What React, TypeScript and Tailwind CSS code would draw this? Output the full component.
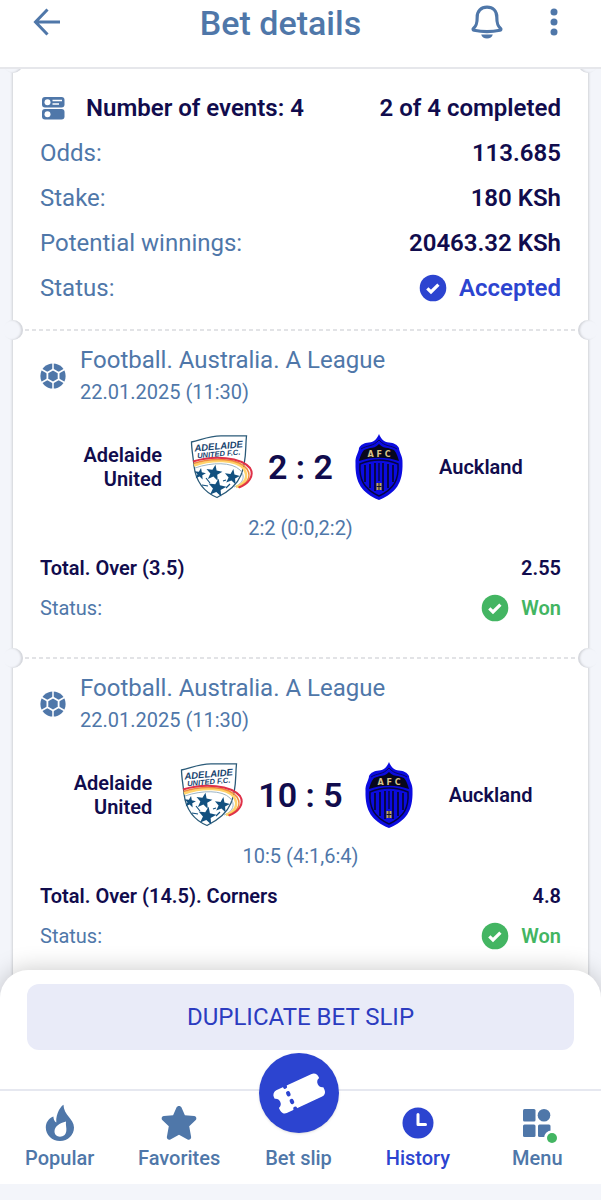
import type { ReactNode } from "react";

type Event = {
  id: number;
  score: string;
  periods: string;
  market: string;
  odds: string;
};

const events: Event[] = [
  { id: 1, score: "2 : 2", periods: "2:2 (0:0,2:2)", market: "Total. Over (3.5)", odds: "2.55" },
  { id: 2, score: "10 : 5", periods: "10:5 (4:1,6:4)", market: "Total. Over (14.5). Corners", odds: "4.8" },
];

const summary = [
  { label: "Odds:", value: "113.685" },
  { label: "Stake:", value: "180 KSh" },
  { label: "Potential winnings:", value: "20463.32 KSh" },
];

function BackIcon() {
  return (
    <svg width="28" height="28" viewBox="0 0 28 28" fill="none" stroke="currentColor" strokeWidth="3">
      <path d="M28 14H3M15.500 1.500 3.500 14l12 12.500" />
    </svg>
  );
}

function BellIcon() {
  return (
    <svg width="32" height="36" viewBox="0 0 32 36" fill="none" stroke="currentColor" strokeWidth="3.200" strokeLinejoin="round">
      <path d="M16 3.200c-6 0-9.800 4-9.800 9.800 0 6.500-.8 8.800-3.700 11.500-.8.800-.5 1.600.5 1.800 8 1.700 18 1.700 26 0 1-.2 1.300-1 .5-1.800-2.900-2.700-3.700-5-3.700-11.500 0-5.800-3.800-9.800-9.800-9.800Z" />
      <path d="M10.200 30.500h11.600c-.6 2.600-2.800 4-5.800 4s-5.200-1.400-5.800-4Z" fill="currentColor" stroke="none" />
    </svg>
  );
}

function DotsIcon() {
  return (
    <svg width="8" height="28" viewBox="0 0 8 28" fill="currentColor">
      <circle cx="4" cy="4" r="3.500" />
      <circle cx="4" cy="14" r="3.500" />
      <circle cx="4" cy="24" r="3.500" />
    </svg>
  );
}

function EventsIcon() {
  return (
    <svg width="26" height="26" viewBox="0 0 26 26">
      <rect x="2" y="2" width="22.500" height="10.500" rx="3" fill="#4f77a9" />
      <rect x="2" y="14" width="22.500" height="10.500" rx="3" fill="#4f77a9" />
      <circle cx="7.500" cy="7.250" r="3" fill="#fff" />
      <circle cx="7.500" cy="19.250" r="3" fill="#fff" />
      <path d="M12.500 5.500h9.500M12.500 9h6.500" stroke="#fff" strokeWidth="1.600" />
    </svg>
  );
}

function BallIcon() {
  return (
    <svg width="26" height="26" viewBox="0 0 26 26">
      <circle cx="13" cy="13" r="12.600" fill="#4f77a9" />
      <path
        d="M13 0v8M13 18v8M1.700 6.500l7 4M24.300 6.500l-7 4M1.700 19.500l7-4M24.300 19.500l-7-4"
        stroke="#fff"
        strokeWidth="1.500"
      />
      <path d="M13 6.500 18.600 9.750v6.500L13 19.500l-5.600-3.250v-6.500Z" fill="#4f77a9" stroke="#fff" strokeWidth="1.800" />
    </svg>
  );
}

function CheckBadge() {
  return (
    <svg width="28" height="28" viewBox="0 0 28 28" aria-hidden="true">
      <circle cx="14" cy="14" r="13.300" fill="currentColor" />
      <path d="m8.300 14.300 3.700 3.600 7.400-7.300" fill="none" stroke="#fff" strokeWidth="3.200" />
    </svg>
  );
}

function Star({ x, y, r }: { x: number; y: number; r: number }) {
  return (
    <path
      transform={`translate(${x} ${y}) scale(${r}) rotate(10)`}
      d="M0-1 .25-.35.95-.31.41.13.59.81 0 .43-.59.81-.41.13-.95-.31-.25-.35Z"
      fill="#12507f"
    />
  );
}

function AdelaideCrest() {
  return (
    <svg className="shrink-0" width="64" height="64" viewBox="0 0 64 64" role="img" aria-label="Adelaide United">
      <path d="M1.500 7C10 5.500 18 .8 31 .8S48 1 56.500.8C55 15 57 25 51 40 47 50 38 57 27 62.500 14 57 6 47 4 31 3.200 22 1.500 14 1.500 7Z" fill="#fff" stroke="#2a5a78" strokeWidth="1.300" />
      <Star x={10} y={39} r={6} />
      <Star x={24} y={38} r={8.5} />
      <Star x={42} y={42} r={8} />
      <Star x={27} y={53} r={9.5} />
      <path d="M12 50l6 1M33 46l3-1M16 43l4 5M36 53l4-4" stroke="#12507f" strokeWidth="1.200" />
      <path d="M5 33C22 27 42 27 50 35c6 6 3 14-6 17" fill="none" stroke="#9db4c4" strokeWidth="1" />
      <path d="M4 30.500C22 24 46 24 54 34c5 8 1 15-8 18" fill="none" stroke="#ffd36b" strokeWidth="2.500" />
      <path d="M3.500 28.500C23 22 49 23 57 34c5 8 0 15-9 18.500" fill="none" stroke="#f08a3c" strokeWidth="1.500" />
      <path d="M3 26.500C24 20 51 22 60 33c5 8-2 16-11 19.500" fill="none" stroke="#df3148" strokeWidth="2" />
      <g transform="rotate(-5 28 16)" fill="#17436e" fontFamily="Liberation Sans, sans-serif" fontWeight="700" fontStyle="italic" textAnchor="middle">
        <text x="29" y="14.500" fontSize="9.500">ADELAIDE</text>
        <text x="28.500" y="21.500" fontSize="7.500">UNITED F.C.</text>
      </g>
    </svg>
  );
}

function AucklandCrest() {
  return (
    <svg className="shrink-0" width="64" height="66" viewBox="0 0 64 66" role="img" aria-label="Auckland">
      <path d="M32 0c2 5 5 8 10 8.500 5 .5 8 2 10 5.500 0 4 4 8 3.500 15C56 49 49 59 32 66 15 59 8 49 8.500 29 8 22 12 18 12 14c2-3.500 5-5 10-5.500C27 8 30 5 32 0Z" fill="#0b0be0" />
      <path d="M32 10c3 3 6 4 9 4l6 2c2 2 4 7 5 11-11-4.500-29-4.500-40 0 1-4 3-9 5-11l6-2c3 0 6-1 9-4Z" fill="#07071b" />
      <path d="M13 30c12-5 26-5 38 0 1 16-4 25-19 32C17 55 12 46 13 30Z" fill="none" stroke="#050540" strokeWidth="1.500" />
      <path d="M18 31v17M23 30v24M28 29v28M36 29v28M41 30v24M46 31v17" stroke="#07074a" strokeWidth="2" />
      <path d="M32 29v18" stroke="#07074a" strokeWidth="1.500" />
      <path d="M14 15c6-4 12-2 18-9 6 7 12 5 18 9" fill="none" stroke="#070760" strokeWidth="1" />
      <rect x="29.500" y="49" width="5" height="7" fill="#c4a756" />
      <path d="M32 49v7M29.500 52.500h5" stroke="#111133" strokeWidth="1" />
      <text x="32" y="23" textAnchor="middle" fontFamily="DejaVu Sans, sans-serif" fontSize="8" fontWeight="700" fill="#d9c48b">
        A F C
      </text>
    </svg>
  );
}

function FlameIcon() {
  return (
    <svg width="30" height="38" viewBox="0 0 30 38" fill="currentColor">
      <path
        fillRule="evenodd"
        d="M18.500.8c-1.500.4-8 8-7.200 17.700-2-1-2.800-3.500-2.900-6C3.500 14.500.8 18.500.8 23.500.8 31 7 37 15 37s14-6 14-13.500C29 15 18.500 11 18.500.8ZM21 17.500c-6.500 1.500-11.500 5-11.500 10 0 3 2.300 5.200 5.500 5.200 3.500 0 5.800-2 6.300-5.700.5-3-.8-6-.3-9.500Z"
      />
    </svg>
  );
}

function StarIcon() {
  return (
    <svg width="36" height="36" viewBox="0 0 36 36" fill="currentColor">
      <path d="M15.500 2.500c1-2 4-2 5 0l3.400 7.700 9.200.9c2.200.3 3 2.700 1.400 4.200l-6.300 6 1.900 10.500c.4 2.200-1.700 3.500-3.500 2.600L18 29.800l-8.600 4.600c-1.800.9-3.900-.4-3.500-2.600l1.900-10.500-6.300-6c-1.600-1.500-.8-3.900 1.400-4.200l9.200-.9Z" />
    </svg>
  );
}

function TicketIcon() {
  return (
    <svg width="56" height="56" viewBox="0 0 56 56">
      <g transform="rotate(-25 28 28)">
        <path
          d="M8.500 16h39a5 5 0 0 1 5 5v2a5.200 5.200 0 0 0 0 10v3a5 5 0 0 1-5 5h-39a5 5 0 0 1-5-5v-3a5.200 5.200 0 0 0 0-10v-2a5 5 0 0 1 5-5Z"
          fill="#fff"
        />
        <path d="M18 15v1.500M18 23.500v1.500M18 32v1.500M18 40.500V42" stroke="#2c44d0" strokeWidth="4" strokeLinecap="round" />
      </g>
    </svg>
  );
}

function ClockIcon() {
  return (
    <svg width="32" height="32" viewBox="0 0 32 32">
      <circle cx="16" cy="16" r="15.500" fill="currentColor" />
      <path d="M16 7.500V17.500h7.500" fill="none" stroke="#fff" strokeWidth="3" strokeLinecap="round" strokeLinejoin="round" />
    </svg>
  );
}

function MenuIcon() {
  return (
    <svg width="36" height="36" viewBox="0 0 36 36" fill="currentColor">
      <rect x="4" y="4" width="12.500" height="12.500" rx="1.500" />
      <circle cx="25" cy="10.200" r="6.300" />
      <rect x="4" y="19.500" width="12.500" height="12.500" rx="1.500" />
      <rect x="19" y="19.500" width="12.500" height="12.500" rx="1.500" />
      <circle cx="32.500" cy="33" r="7.500" fill="#fff" />
    </svg>
  );
}

function Notches({ className }: { className: string }) {
  return (
    <>
      <span className={`absolute -left-2.5 size-5 rounded-full bg-[#f3f5fa] shadow-[inset_-2px_0_2px_#d3d5da] ${className}`} />
      <span className={`absolute -right-2.5 size-5 rounded-full bg-[#f3f5fa] shadow-[inset_2px_0_2px_#d3d5da] ${className}`} />
    </>
  );
}

function EventSection({ event }: { event: Event }) {
  return (
    <section className="relative px-[27px] pt-3 pb-9">
      <Notches className="-top-2.5" />
      <div className="absolute inset-x-3 top-0 h-0.5 -translate-y-px bg-[repeating-linear-gradient(90deg,#e2e3e6_0_4px,transparent_4px_7px)]" />
      <div className="flex items-center gap-3.5 pt-0.5">
        <BallIcon />
        <div className="text-[#4f77a9]">
          <h2 className="text-2xl leading-8">Football. Australia. A League</h2>
          <p className="text-xl leading-8">22.01.2025 (11:30)</p>
        </div>
      </div>
      <div className="mt-[26px] flex items-center text-xl leading-6 font-semibold">
        <p className="flex-1 pr-7 pl-4 text-right">Adelaide United</p>
        <AdelaideCrest />
        <p className="px-3.5 text-[34px] leading-10 whitespace-pre">{event.score}</p>
        <AucklandCrest />
        <p className="flex-1 pr-4 pl-7">Auckland</p>
      </div>
      <p className="mt-3.5 text-center text-xl leading-7 text-[#4f77a9]">{event.periods}</p>
      <div className="mt-3 flex justify-between text-xl leading-7 font-semibold">
        <p>{event.market}</p>
        <p>{event.odds}</p>
      </div>
      <div className="mt-3 flex justify-between text-xl leading-7">
        <p className="text-[#4f77a9]">Status:</p>
        <p className="flex items-center gap-3 font-semibold text-[#43b562]">
          <CheckBadge />
          Won
        </p>
      </div>
    </section>
  );
}

function NavItem({ label, active, children }: { label: string; active?: boolean; children: ReactNode }) {
  return (
    <a
      href="#"
      className={`relative flex flex-1 flex-col items-center text-xl leading-6 font-medium ${active ? "text-[#2c44d0]" : "text-[#4f77a9]"}`}
    >
      <span className="flex h-10 items-center justify-center">{children}</span>
      <span className="mt-[3px]">{label}</span>
    </a>
  );
}

export default function App() {
  return (
    <div className="flex min-h-screen flex-col bg-[#f3f5fa] font-[Roboto,sans-serif] text-[#110c4d]">
      <header className="sticky top-0 z-20 flex h-[69px] items-start border-b-2 border-[#e6e7eb] bg-white px-8 text-[#4f77a9]">
        <button type="button" aria-label="Back" className="mt-2 w-[30px]">
          <BackIcon />
        </button>
        <h1 className="flex-1 pl-7 text-center text-[34px] leading-[46px] font-medium">Bet details</h1>
        <button type="button" aria-label="Notifications" className="mt-1 w-8">
          <BellIcon />
        </button>
        <button type="button" aria-label="More" className="mt-2 ml-9 flex w-[30px] justify-center">
          <DotsIcon />
        </button>
      </header>

      <main className="mx-[13px] flex-1 bg-white shadow-[0_0_3px_rgba(0,0,0,0.25)]">
        <section className="relative px-[27px] pt-[21px] pb-6 text-2xl leading-9">
          <Notches className="-top-4" />
          <div className="flex flex-col gap-[9px]">
            <div className="flex items-center font-semibold">
              <EventsIcon />
              <p className="ml-5 flex-1">Number of events: 4</p>
              <p>2 of 4 completed</p>
            </div>
            {summary.map((row) => (
              <div key={row.label} className="flex justify-between">
                <p className="text-[#4f77a9]">{row.label}</p>
                <p className="font-semibold">{row.value}</p>
              </div>
            ))}
            <div className="flex justify-between">
              <p className="text-[#4f77a9]">Status:</p>
              <p className="flex items-center gap-3 font-semibold text-[#2c44d0]">
                <CheckBadge />
                Accepted
              </p>
            </div>
          </div>
        </section>
        {events.map((event) => (
          <EventSection key={event.id} event={event} />
        ))}
      </main>

      <footer className="sticky bottom-0 z-10 -mt-4">
        <div className="rounded-t-[28px] bg-white shadow-[0_0_24px_rgba(0,0,0,0.22)]">
          <div className="px-[27px] pt-3.5 pb-[39px]">
            <button type="button" className="h-[66px] w-full rounded-xl bg-[#e9ebf8] text-2xl text-[#2c3cc0]">
              DUPLICATE BET SLIP
            </button>
          </div>
          <nav className="flex border-t-2 border-[#e6e8f0] bg-white pt-3 pr-1 pb-3.5">
            <NavItem label="Popular">
              <FlameIcon />
            </NavItem>
            <NavItem label="Favorites">
              <StarIcon />
            </NavItem>
            <NavItem label="Bet slip">
              <span className="absolute -top-[50px] flex size-20 items-center justify-center rounded-full bg-[#2c44d0] shadow-sm">
                <TicketIcon />
              </span>
            </NavItem>
            <NavItem label="History" active>
              <ClockIcon />
            </NavItem>
            <NavItem label="Menu">
              <span className="relative">
                <MenuIcon />
                <span className="absolute -right-0.5 -bottom-0.5 size-2.5 rounded-full bg-[#43b562]" />
              </span>
            </NavItem>
          </nav>
        </div>
        <div className="relative h-4 bg-[#f3f5fa]" />
      </footer>
    </div>
  );
}
